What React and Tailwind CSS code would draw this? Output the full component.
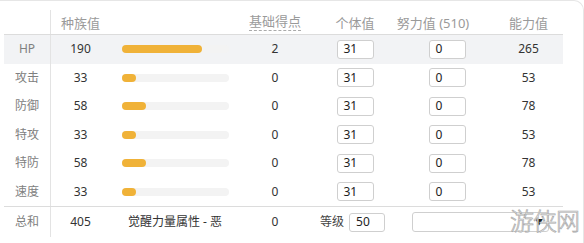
import React from 'react';

const stats = [
  { label: 'HP', base: 190, pt: 2, iv: 31, ev: 0, total: 265 },
  { label: '攻击', base: 33, pt: 0, iv: 31, ev: 0, total: 53 },
  { label: '防御', base: 58, pt: 0, iv: 31, ev: 0, total: 78 },
  { label: '特攻', base: 33, pt: 0, iv: 31, ev: 0, total: 53 },
  { label: '特防', base: 58, pt: 0, iv: 31, ev: 0, total: 78 },
  { label: '速度', base: 33, pt: 0, iv: 31, ev: 0, total: 53 },
];

// small boxed input like the source page
const Box = ({ value, className = '' }) => (
  <div className={`h-[19px] border border-[#cfcfcf] rounded-[3px] bg-white pl-[6px] flex items-center text-[12px] text-[#222] ${className}`}>
    {value}
  </div>
);

const StatRow = ({ s, highlight }) => (
  <div className={`flex h-[28.5px] items-center ${highlight ? 'bg-[#f2f3f5]' : ''}`}>
    <div className="w-[47px] h-full flex items-center justify-center border-r border-[#e3e3e3] text-[#808080]">{s.label}</div>
    <div className="w-[59px] text-center text-[#333]">{s.base}</div>
    <div className="w-[130px] pl-[12px]">
      <div className="w-[107px] h-[8px] rounded-full bg-[#f3f3f3]">
        <div className="h-full rounded-full bg-[#f0b238]" style={{ width: `${(s.base / 255) * 107}px` }} />
      </div>
    </div>
    <div className="w-[70px] text-center text-[#333]">{s.pt}</div>
    <div className="w-[90px] flex justify-center">
      <Box value={s.iv} className="w-[37px]" />
    </div>
    <div className="w-[94px] flex justify-center">
      <Box value={s.ev} className="w-[37px]" />
    </div>
    <div className="w-[69px] text-center text-[#333]">{s.total}</div>
  </div>
);

export default function App() {
  return (
    <div className="relative w-[584px] h-[243px] overflow-hidden bg-white border-t border-r border-[#e6e6e6] rounded-tr-[10px] text-[12px] leading-[20px] font-['Noto_Sans','Noto_Sans_CJK_SC',sans-serif]">
      <div className="ml-[4px] w-[559px]">
        {/* header */}
        <div className="flex h-[34px] border-b border-[#dcdcdc] text-[13px] text-[#9a9a9a]">
          <div className="w-[47px] mt-[9px] border-r border-[#e3e3e3]" />
          <div className="w-[59px] flex justify-center pt-[12px]">种族值</div>
          <div className="w-[130px]" />
          <div className="w-[70px] flex justify-center pt-[12px]">
            <span className="border-b border-dashed border-[#aaa] leading-[17px] h-[18px]">基础得点</span>
          </div>
          <div className="w-[90px] flex justify-center pt-[12px]">个体值</div>
          <div className="w-[94px] flex justify-center pt-[12px] pr-[28px] whitespace-nowrap">努力值 (510)</div>
          <div className="w-[69px] flex justify-center pt-[12px]">能力值</div>
        </div>

        {stats.map((s, i) => (
          <StatRow key={s.label} s={s} highlight={i === 0} />
        ))}

        {/* totals */}
        <div className="flex h-[33px] border-t border-[#dcdcdc] items-start">
          <div className="w-[47px] h-[30px] flex items-center justify-center border-r border-[#e3e3e3] text-[#808080]">总和</div>
          <div className="w-[59px] h-[30px] flex items-center justify-center text-[#333]">405</div>
          <div className="w-[130px] h-[30px] flex items-center justify-center text-[#333]">觉醒力量属性 - 恶</div>
          <div className="w-[70px] h-[30px] flex items-center justify-center text-[#333]">0</div>
          <div className="w-[90px] h-[30px] flex items-center pl-[10px] gap-[5px]">
            <span className="text-[#444]">等级</span>
            <Box value="50" className="w-[36px]" />
          </div>
          <div className="w-[163px] h-[30px] flex items-center pl-[12px]">
            <div className="w-[137px] h-[20px] border border-[#cfcfcf] rounded-[3px] bg-white flex items-center justify-end pr-[5px]">
              <span className="text-[8px] leading-none text-[#222]">▼</span>
            </div>
          </div>
        </div>
      </div>

      {/* watermark */}
      <div className="absolute left-[510px] top-[204px] whitespace-nowrap text-[24px] leading-[30px] tracking-[-1px] text-white [-webkit-text-stroke:0.7px_#a8a8a8] font-['Noto_Sans_CJK_SC',sans-serif] font-light pointer-events-none">
        游侠网
      </div>
    </div>
  );
}
